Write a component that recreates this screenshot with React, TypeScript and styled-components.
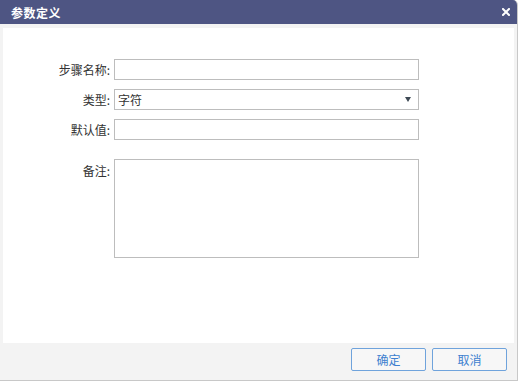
import React from "react";
import styled, { createGlobalStyle } from "styled-components";

const Global = createGlobalStyle`
  html, body { margin: 0; padding: 0; background: #ffffff; }
  body { font-family: "Noto Sans CJK SC", "Liberation Sans", sans-serif; }
  * { box-sizing: border-box; }
`;

const Window = styled.div`
  width: 518px;
  height: 381px;
  display: flex;
  flex-direction: column;
  background: #f3f3f3;
  border-top-right-radius: 5px;
  border-right: 1px solid #c8c8c8;
  border-bottom: 1px solid #c8c8c8;
  overflow: hidden;
`;

const TitleBar = styled.div`
  height: 24px;
  flex: none;
  display: flex;
  align-items: center;
  justify-content: space-between;
  padding: 0 7px 0 11px;
  background: #4e5583;
  color: #ffffff;
`;

const Title = styled.span`
  font-size: 12px;
  font-weight: bold;
  letter-spacing: 0.5px;
`;

const CloseIcon = styled.svg`
  width: 8px;
  height: 8px;
  display: block;
`;

const Body = styled.div`
  flex: 1;
  display: flex;
  flex-direction: column;
  padding: 4px 3px 0 3px;
`;

const Panel = styled.div`
  height: 315px;
  background: #ffffff;
  padding-top: 31px;
`;

const Form = styled.div`
  display: grid;
  grid-template-columns: 107px 305px;
  column-gap: 4px;
  row-gap: 9px;
`;

const Label = styled.label<{ $top?: boolean }>`
  font-size: 12px;
  color: #333333;
  text-align: right;
  line-height: 21px;
  align-self: ${(p) => (p.$top ? "start" : "center")};
  padding-top: ${(p) => (p.$top ? "1px" : "0")};
`;

const Input = styled.div`
  height: 21px;
  border: 1px solid #bdbdbd;
  background: #ffffff;
`;

const Select = styled.div`
  height: 21px;
  border: 1px solid #bdbdbd;
  background: #ffffff;
  display: flex;
  align-items: center;
  justify-content: space-between;
  padding: 0 7px 0 3px;
  font-size: 12px;
  color: #333333;
`;

const Caret = styled.span`
  width: 0;
  height: 0;
  border-left: 3.5px solid transparent;
  border-right: 3.5px solid transparent;
  border-top: 5px solid #3f4a55;
`;

const TextArea = styled.div`
  height: 99px;
  border: 1px solid #bdbdbd;
  background: #ffffff;
  margin-top: 10px;
`;

const NoteLabel = styled(Label)`
  margin-top: 10px;
`;

const Footer = styled.div`
  flex: 1;
  display: flex;
  justify-content: flex-end;
  align-items: flex-start;
  gap: 6px;
  padding: 5px 7px 0 0;
`;

const Button = styled.button`
  width: 75px;
  height: 23px;
  border: 1px solid #6fa3dc;
  border-radius: 2px;
  background: #f7f7f7;
  color: #3d7fcf;
  font-family: "Noto Sans CJK SC", sans-serif;
  font-size: 12px;
  padding: 0;
`;

export default function App() {
  return (
    <>
      <Global />
      <Window>
        <TitleBar>
          <Title>参数定义</Title>
          <CloseIcon viewBox="0 0 8 8">
            <path d="M1 1 L7 7 M7 1 L1 7" stroke="#ffffff" strokeWidth="2" strokeLinecap="square" />
          </CloseIcon>
        </TitleBar>
        <Body>
          <Panel>
            <Form>
              <Label>步骤名称:</Label>
              <Input />
              <Label>类型:</Label>
              <Select>
                <span>字符</span>
                <Caret />
              </Select>
              <Label>默认值:</Label>
              <Input />
              <NoteLabel $top>备注:</NoteLabel>
              <TextArea />
            </Form>
          </Panel>
          <Footer>
            <Button>确定</Button>
            <Button>取消</Button>
          </Footer>
        </Body>
      </Window>
    </>
  );
}
